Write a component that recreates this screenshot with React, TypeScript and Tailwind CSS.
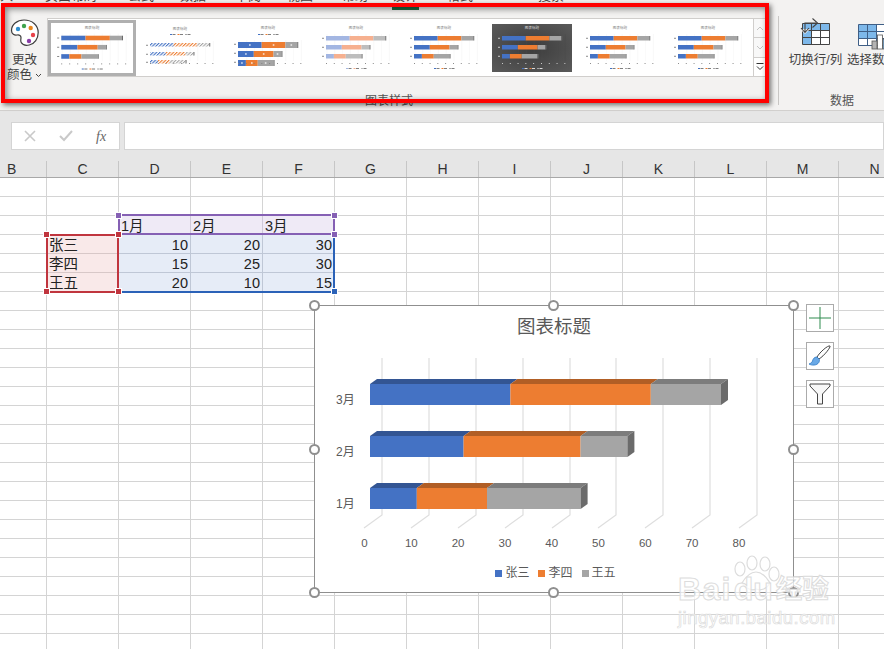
import React from "react";

const columns = ["B", "C", "D", "E", "F", "G", "H", "I", "J", "K", "L", "M", "N"];
const tabs = [
  ["入", "w-[45px]"],
  ["页面布局", "w-[83px]"],
  ["公式", "w-[52px]"],
  ["数据", "w-[55px]"],
  ["审阅", "w-[52px]"],
  ["视图", "w-[55px]"],
  ["帮助", "w-[50px]"],
  ["设计", "w-[55px]"],
  ["格式", "w-[91px]"],
  ["搜索", "w-[40px]"],
];

// contents of the small data table, keyed by sheet row
const tableRows: Record<number, string[]> = {
  2: ["", "1月", "2月", "3月"],
  3: ["张三", "10", "20", "30"],
  4: ["李四", "15", "25", "30"],
  5: ["王五", "20", "10", "15"],
};

const bars = [
  { label: "3月", y: 384, values: [30, 30, 15] },
  { label: "2月", y: 436, values: [20, 25, 10] },
  { label: "1月", y: 488, values: [10, 15, 20] },
];
const front = ["#4472c4", "#ed7d31", "#a5a5a5"];
const top = ["#335593", "#b15e25", "#7c7c7c"];

type ThumbProps = {
  title?: number;
  legend?: number;
  rows?: number[];
  h?: number;
  colors?: string[];
  dark?: boolean;
  hatch?: boolean;
  labels?: boolean;
  start?: number;
  id: string;
};

const Thumb: React.FC<ThumbProps> = ({
  title = 4,
  legend = 44,
  rows = [12, 21, 30],
  h = 4.5,
  colors = ["#4472c4", "#ed7d31", "#a5a5a5"],
  dark,
  hatch,
  labels,
  start = 10,
  id,
}) => {
  const data = [
    [30, 30, 15],
    [20, 25, 10],
    [10, 15, 20],
  ];
  const ink = dark ? "#d9d9d9" : "#7f7f7f";
  return (
    <svg viewBox="0 0 80 48" className="block w-full h-full">
      <defs>
        <radialGradient id={`${id}-bg`} cx="0.5" cy="0.5" r="0.7">
          <stop offset="0" stopColor="#3c3c3c" />
          <stop offset="1" stopColor="#5a5a5a" />
        </radialGradient>
        {colors.map((c, i) => (
          <pattern key={c} id={`${id}-h${i}`} width="2.4" height="2.4" patternUnits="userSpaceOnUse" patternTransform="rotate(45)">
            <rect width="2.4" height="2.4" fill="#ffffff" />
            <rect width="1.1" height="2.4" fill={c} />
          </pattern>
        ))}
      </defs>
      <rect width="80" height="48" fill={dark ? `url(#${id}-bg)` : "#ffffff"} />
      {[0, 1, 2, 3, 4, 5, 6, 7, 8].map((i) => (
        <line
          key={i}
          x1={start + 1 + i * 7.8}
          x2={start + 1 + i * 7.8}
          y1={rows[0] - 2}
          y2="37"
          stroke={dark ? "#4c4c4c" : "#f1f1f1"}
          strokeWidth="0.4"
        />
      ))}
      <text x="40" y={title + 1.4} textAnchor="middle" fontSize="3.6" fill={ink}>
        图表标题
      </text>
      {data.map((row, r) => {
        let x = start;
        return row.map((v, c) => {
          const w = v * 0.79;
          const px = x;
          x += w;
          return (
            <g key={`${r}-${c}`}>
              <rect
                x={px}
                y={rows[r]}
                width={w}
                height={h}
                fill={hatch ? `url(#${id}-h${c})` : colors[c]}
              />
              {labels && <rect x={px + w / 2 - 0.8} y={rows[r] + h / 2 - 0.6} width="1.6" height="1.2" fill="#ffffff" />}
              {c === 2 && <rect x={px + w} y={rows[r]} width="1" height={h} fill="#6b6b6b" />}
            </g>
          );
        });
      })}
      {[0, 1, 2].map((i) => (
        <rect key={i} x={start - 4} y={rows[i] + 1.8} width="2" height="0.9" fill={ink} />
      ))}
      {[0, 1, 2, 3, 4, 5, 6, 7, 8].map((i) => (
        <rect key={i} x={start + i * 7.8} y="39" width="0.9" height="1" fill={ink} />
      ))}
      <g>
        <rect x="30" y={legend} width="2" height="1" fill={colors[0]} />
        <rect x="32.5" y={legend} width="3" height="1" fill={ink} />
        <rect x="37.5" y={legend} width="2" height="1" fill={colors[1]} />
        <rect x="40" y={legend} width="3" height="1" fill={ink} />
        <rect x="45" y={legend} width="2" height="1" fill={colors[2]} />
        <rect x="47.5" y={legend} width="3" height="1" fill={ink} />
      </g>
    </svg>
  );
};

const Palette = () => (
  <svg width="30" height="30" viewBox="0 0 30 30" className="block mt-[2px]">
    <path
      d="M14 2C7 2 1.5 6.5 1.5 12.5c0 3.5 3 5 5.500 4.500 2.500-.4 4 .6 4 2.500 0 2-.8 3.200.2 5 1.300 2.300 4.500 3.200 8 2.500 5.500-1.200 9-6.500 9-12.500C28.200 7 22 2 14 2z"
      fill="#ffffff"
      stroke="#3c3c3c"
      strokeWidth="1.2"
    />
    <circle cx="8" cy="11" r="2.2" fill="#2e8fd0" />
    <circle cx="14" cy="8" r="2.2" fill="#3fa34d" />
    <circle cx="20.7" cy="10" r="2.2" fill="#e9861c" />
    <circle cx="23" cy="17" r="2.2" fill="#e8424a" />
    <circle cx="19" cy="23" r="2.2" fill="#8a3ea8" />
  </svg>
);

const SwitchIcon = () => (
  <svg width="32" height="28" viewBox="0 0 32 28" className="block">
    <rect x="2.5" y="6.5" width="27" height="21" fill="#ffffff" />
    <path d="M2.500 6.500h27v7h-27z" fill="#7db8ea" />
    <path d="M2.500 13.500h9v14h-9z" fill="#7db8ea" />
    <path d="M2.500 6.500h27v21h-27zM2.500 13.500h27M2.500 20.500h27M11.500 6.500v21M20.500 6.500v21" fill="none" stroke="#444444" strokeWidth="1" />
    <path d="M0 12l5 5 5-5z" fill="#f3f2f1" />
    <path d="M1 11l4 4.500 4-4.500M5 15V6h11M12.500 1.500l5 4.500-5 4.500" fill="none" stroke="#444444" strokeWidth="1.1" />
  </svg>
);

const SelectIcon = () => (
  <svg width="32" height="28" viewBox="0 0 32 28" className="block overflow-visible">
    <rect x="1.5" y="1.5" width="30" height="21" fill="#ffffff" />
    <path d="M1.500 1.500h18v14h-18z" fill="#7db8ea" />
    <path d="M1.500 1.500h30v21h-30zM1.500 8.500h30M1.500 15.500h30M10.500 1.500v21M19.500 1.500v21" fill="none" stroke="#3f5f86" strokeWidth="1" />
    <rect x="15" y="18" width="5" height="8" fill="#b3b3b3" stroke="#555555" strokeWidth="0.8" />
    <rect x="20.5" y="12" width="5" height="14" fill="#ffffff" stroke="#555555" strokeWidth="0.8" />
    <rect x="26" y="16" width="5" height="10" fill="#7db8ea" stroke="#555555" strokeWidth="0.8" />
  </svg>
);

const Handle = ({ cls, color }: { cls: string; color: string }) => (
  <span className={`absolute w-[7px] h-[7px] border border-white ${cls} ${color}`} />
);

const Knob = ({ cls }: { cls: string }) => (
  <span className={`absolute w-[11px] h-[11px] rounded-full bg-white border-2 border-[#8f8f8f] ${cls}`} />
);

const ChartPlot = () => {
  const grid = [382, 429, 476, 523, 570, 616, 663, 710, 757];
  const scale = 4.68;
  return (
    <svg viewBox="315 345 478 210" className="block w-full h-[210px]">
      {grid.map((x) => (
        <path key={x} d={`M${x} 358V515L${x - 18} 528`} fill="none" stroke="#dedede" strokeWidth="1.2" />
      ))}
      {bars.map((b) => {
        let x = 370;
        return (
          <g key={b.label}>
            <text x="336" y={b.y + 20} fontSize="12" fill="#595959">
              {b.label}
            </text>
            {b.values.map((v, i) => {
              const w = v * scale;
              const px = x;
              x += w;
              return (
                <g key={i}>
                  <path d={`M${px} ${b.y}l7 -5h${w}l-7 5z`} fill={top[i]} />
                  <rect x={px} y={b.y} width={w} height="21" fill={front[i]} />
                  {i === 2 && <path d={`M${px + w} ${b.y}l7 -5v21l-7 5z`} fill="#6b6b6b" />}
                </g>
              );
            })}
          </g>
        );
      })}
      {[0, 10, 20, 30, 40, 50, 60, 70, 80].map((t, i) => (
        <text key={t} x={364.5 + i * 46.8} y="547" textAnchor="middle" fontSize="11.5" fill="#595959">
          {t}
        </text>
      ))}
    </svg>
  );
};

const App: React.FC = () => {
  return (
    <div className="relative w-[884px] h-[649px] overflow-hidden bg-white text-[#333333] font-['Liberation_Sans','Noto_Sans_CJK_SC',sans-serif]">
      {/* Tab strip, almost scrolled off */}
      <div className="flex items-end h-[3px] overflow-hidden bg-[#f3f2f1] text-[13px] leading-[14px] text-[#444444]">
        {tabs.map(([t, w]) => (
          <span key={t} className={`shrink-0 whitespace-nowrap ${w}`}>
            {t}
          </span>
        ))}
      </div>

      {/* Ribbon */}
      <div className="relative flex h-[108px] bg-[#f3f2f1] border-b border-[#d2d0ce]">
        <span className="absolute left-[392px] top-[4px] w-[27px] h-[3px] bg-[#1e6b43]" />
        <div className="flex flex-col w-[779px] shrink-0 border-r border-[#c8c6c4] mt-[13px] mb-[5px]">
          <div className="flex">
            <div className="flex flex-col items-center w-[47px] shrink-0 pl-[2px] text-[12.5px] leading-[15px] text-[#444444]">
              <Palette />
              <span className="mt-[5px]">更改</span>
              <span className="flex items-center">
                颜色
                <svg width="7" height="5" viewBox="0 0 7 5" className="ml-[3px]">
                  <path d="M1 1l2.500 2.500L6 1" fill="none" stroke="#444444" strokeWidth="1" />
                </svg>
              </span>
            </div>
            <div className="flex w-[719px] h-[59px] mt-[2px] bg-white border border-[#d0cecc]">
              <div className="flex-1 flex items-center gap-[8px] pr-[5px]">
                <div className="w-[88px] h-[56px] shrink-0 border-[3px] border-[#b0b0b0] bg-white">
                  <Thumb id="a" />
                </div>
                <div className="w-[80px] h-[48px] shrink-0 -ml-[4px]">
                  <Thumb id="b" hatch title={5} legend={10} rows={[19, 28, 36]} h={3.5} />
                </div>
                <div className="w-[80px] h-[48px] shrink-0">
                  <Thumb id="c" labels title={4} legend={10} rows={[18, 27, 36]} h={6} />
                </div>
                <div className="w-[80px] h-[48px] shrink-0">
                  <Thumb id="d" colors={["#a3b6e2", "#f6b08f", "#bdbdbd"]} />
                </div>
                <div className="w-[80px] h-[48px] shrink-0">
                  <Thumb id="e" />
                </div>
                <div className="w-[80px] h-[48px] shrink-0">
                  <Thumb id="f" dark />
                </div>
                <div className="w-[80px] h-[48px] shrink-0">
                  <Thumb id="g" />
                </div>
                <div className="w-[80px] h-[48px] shrink-0">
                  <Thumb id="h" />
                </div>
              </div>
              <div className="flex flex-col w-[12px] shrink-0 border-l border-[#d0cecc] bg-[#f8f8f8]">
                <div className="flex-1 flex items-center justify-center border-b border-[#d0cecc]">
                  <svg width="8" height="5" viewBox="0 0 8 5">
                    <path d="M1 4l3-3 3 3" fill="none" stroke="#c4c4c4" strokeWidth="1" />
                  </svg>
                </div>
                <div className="flex-1 flex items-center justify-center border-b border-[#d0cecc]">
                  <svg width="8" height="5" viewBox="0 0 8 5">
                    <path d="M1 1l3 3 3-3" fill="none" stroke="#c4c4c4" strokeWidth="1" />
                  </svg>
                </div>
                <div className="flex-1 flex items-center justify-center bg-white">
                  <svg width="8" height="9" viewBox="0 0 8 9">
                    <path d="M.5 1.500h7M1 4.500l3 3 3-3" fill="none" stroke="#333333" strokeWidth="1" />
                  </svg>
                </div>
              </div>
            </div>
          </div>
          <div className="mt-auto -mb-[3px] text-center text-[12px] leading-[14px] text-[#555555]">图表样式</div>
        </div>

        <div className="flex flex-col w-[105px] shrink-0 pt-[14px]">
          <div className="flex pl-[10px] gap-[5px] text-[12.5px] whitespace-nowrap text-[#444444]">
            <div className="flex flex-col items-center w-[53px] shrink-0">
              <SwitchIcon />
              <span className="mt-[8px] leading-[15px]">切换行/列</span>
            </div>
            <div className="flex flex-col w-[54px] shrink-0">
              <div className="w-[32px] ml-[10px] mt-[6px]">
                <SelectIcon />
              </div>
              <span className="mt-[2px] leading-[15px]">选择数据</span>
            </div>
          </div>
          <div className="mt-[26px] ml-[51px] text-[12px] leading-[14px] text-[#555555]">数据</div>
        </div>
      </div>

      {/* Formula bar */}
      <div className="flex h-[50px] items-center gap-[4px] pl-[11px] bg-[#e6e6e6]">
        <div className="flex items-center gap-[23px] w-[109px] h-[28px] pl-[12px] bg-white border border-[#d4d4d4]">
          <svg width="12" height="12" viewBox="0 0 12 12">
            <path d="M1 1l10 10M11 1L1 11" stroke="#c9c9c9" strokeWidth="1.6" />
          </svg>
          <svg width="14" height="12" viewBox="0 0 14 12">
            <path d="M1 6l4 4 8-9" fill="none" stroke="#c9c9c9" strokeWidth="2" />
          </svg>
          <span className="text-[14px] italic font-['Liberation_Serif',serif] text-[#666666]">fx</span>
        </div>
        <div className="flex-1 h-[28px] bg-white border border-[#d4d4d4]" />
      </div>

      {/* Column headers */}
      <div className="grid grid-cols-[47px_repeat(12,72px)] h-[17px] bg-[#e6e6e6] border-b border-[#a8a8a8] text-[14px] leading-[16px] text-[#333333]">
        {columns.map((c, i) => (
          <div key={c} className={`border-r border-[#c6c6c6] ${i === 0 ? "pl-[7px]" : "text-center"}`}>
            {c}
          </div>
        ))}
      </div>

      {/* Sheet cells */}
      <div className="flex flex-col text-[14.5px] leading-[20px] text-[#222222]">
        {Array.from({ length: 25 }).map((_, r) => (
          <div key={r} className="grid grid-cols-[47px_repeat(12,72px)] h-[19px]">
            {columns.map((_c, c) => {
              const row = tableRows[r];
              const val = row && c >= 1 && c <= 4 ? row[c - 1] : "";
              const numeric = r > 2 && c > 1;
              let fill = "border-[#d4d4d4]";
              if (row && c === 1 && r > 2) fill = "bg-[#f9e9e9] border-[#d8c8c8]";
              if (row && c >= 2 && c <= 4 && r === 2) fill = "bg-[#efeaf6] border-[#cfc9d9]";
              if (row && c >= 2 && c <= 4 && r > 2) fill = "bg-[#e6ecf7] border-[#bfc7d6]";
              return (
                <div
                  key={c}
                  className={`border-r border-b px-[2px] overflow-hidden whitespace-nowrap ${fill} ${numeric ? "text-right" : ""}`}
                >
                  {val}
                </div>
              );
            })}
          </div>
        ))}
      </div>

      {/* Range highlights */}
      <div className="absolute left-[118px] top-[214px] w-[217px] h-[21px] border-2 border-[#8560b4]" />
      <div className="absolute left-[46px] top-[234px] w-[73px] h-[59px] border-2 border-[#c0353e]" />
      <div className="absolute left-[118px] top-[234px] w-[217px] h-[59px] border-2 border-t-0 border-l-0 border-[#2b62b8]" />
      <Handle cls="left-[115px] top-[212px]" color="bg-[#8560b4]" />
      <Handle cls="left-[331px] top-[212px]" color="bg-[#8560b4]" />
      <Handle cls="left-[115px] top-[231px]" color="bg-[#c0353e]" />
      <Handle cls="left-[331px] top-[231px]" color="bg-[#8560b4]" />
      <Handle cls="left-[43px] top-[231px]" color="bg-[#c0353e]" />
      <Handle cls="left-[43px] top-[288px]" color="bg-[#c0353e]" />
      <Handle cls="left-[115px] top-[288px]" color="bg-[#c0353e]" />
      <Handle cls="left-[331px] top-[288px]" color="bg-[#2b62b8]" />

      {/* Chart */}
      <div className="absolute left-[314px] top-[305px] w-[480px] h-[288px] flex flex-col bg-white border border-[#8f8f8f]">
        <div className="h-[39px] pt-[8px] text-center text-[18.5px] leading-[26px] text-[#595959]">图表标题</div>
        <ChartPlot />
        <div className="flex items-center justify-center gap-[9px] mt-[10px] pl-[3px] text-[12px] leading-[16px] text-[#595959]">
          <span className="flex items-center gap-[3px]">
            <i className="w-[7px] h-[7px] bg-[#4472c4]" />
            张三
          </span>
          <span className="flex items-center gap-[3px]">
            <i className="w-[7px] h-[7px] bg-[#ed7d31]" />
            李四
          </span>
          <span className="flex items-center gap-[3px]">
            <i className="w-[7px] h-[7px] bg-[#a5a5a5]" />
            王五
          </span>
        </div>
      </div>
      <Knob cls="left-[309px] top-[300px]" />
      <Knob cls="left-[548px] top-[300px]" />
      <Knob cls="left-[788px] top-[300px]" />
      <Knob cls="left-[309px] top-[444px]" />
      <Knob cls="left-[788px] top-[444px]" />
      <Knob cls="left-[309px] top-[587px]" />
      <Knob cls="left-[548px] top-[587px]" />
      <Knob cls="left-[788px] top-[587px]" />

      {/* Chart side buttons */}
      <div className="absolute left-[806px] top-[304px] flex flex-col gap-[10px]">
        <div className="w-[28px] h-[28px] bg-white border border-[#ababab] flex items-center justify-center">
          <svg width="22" height="22" viewBox="0 0 22 22">
            <path d="M11 0v22M0 11h22" stroke="#2e8b4f" strokeWidth="1" />
          </svg>
        </div>
        <div className="w-[28px] h-[28px] bg-white border border-[#ababab] flex items-center justify-center">
          <svg width="24" height="24" viewBox="0 0 24 24">
            <path d="M22 2c1 1-6 10-11 13l-2-2C12 8 20 1 22 2z" fill="#ffffff" stroke="#444444" strokeWidth="1" />
            <path d="M9 13c-3 0-4 2-4.500 4-.4 1.500-2 2.500-3.500 3 3 1.800 8 1.500 9.800-1.500.8-1.500.9-3 .2-3.500z" fill="#6aa9e6" stroke="#2f78c4" strokeWidth="0.8" />
          </svg>
        </div>
        <div className="w-[28px] h-[28px] bg-white border border-[#ababab] flex items-center justify-center">
          <svg width="24" height="24" viewBox="0 0 24 24">
            <path d="M2 2h20v2l-7.500 8v10h-5V12L2 4z" fill="#f7f7f7" stroke="#444444" strokeWidth="1" />
          </svg>
        </div>
      </div>

      {/* Watermark */}
      <div className="absolute left-[678px] top-[555px] w-[160px] text-white/75 [-webkit-text-stroke:1px_#dcdcdc] pointer-events-none">
        <svg width="50" height="38" viewBox="0 0 50 38" className="absolute left-[54px] top-0">
          <g fill="#ffffff" fillOpacity="0.7" stroke="#dcdcdc" strokeWidth="1.2">
            <ellipse cx="8" cy="14" rx="5" ry="7" />
            <ellipse cx="20" cy="8" rx="5" ry="7" />
            <ellipse cx="33" cy="9" rx="5" ry="7" />
            <ellipse cx="42" cy="19" rx="5" ry="7" />
            <path d="M24 17c-7 0-11 6-14 11 4 6 10 8 14 6 5 2 11 0 14-6-3-5-7-11-14-11z" />
          </g>
        </svg>
        <div className="relative flex items-end h-[52px] text-[32px] leading-[36px] font-bold whitespace-nowrap">
          <span className="tracking-[1.3px]">Bai</span>
          <span className="ml-[2px]">du</span>
          <span className="ml-[3px] text-[26.5px]">经验</span>
        </div>
        <div className="text-[18.5px] leading-[22px] tracking-[0.5px] whitespace-nowrap [-webkit-text-stroke:0.7px_#dcdcdc]">jingyan.baidu.com</div>
      </div>

      {/* Red annotation box drawn over the ribbon */}
      <div className="absolute left-[1px] top-[3px] w-[768px] h-[100px] border-[4px] border-[#ff0000] shadow-[2px_2px_5px_rgba(0,0,0,0.55),inset_2px_2px_6px_rgba(0,0,0,0.45)]" />
    </div>
  );
};

export default App;
